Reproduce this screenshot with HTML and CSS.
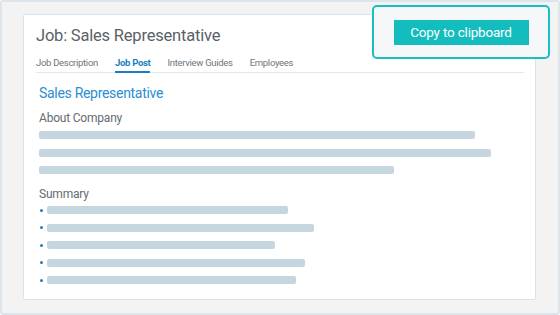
FILE: index.html
```html
<!DOCTYPE html>
<html>
<head>
<title>Job Post</title>
<link rel="stylesheet" href="styles.css">
</head>
<body>

<div class="frame">
  <div class="card">
    <h1 class="job-title">Job: Sales Representative</h1>

    <div class="tabs">
      <span class="tab">Job Description</span>
      <span class="tab active">Job Post</span>
      <span class="tab">Interview Guides</span>
      <span class="tab">Employees</span>
    </div>

    <div class="post">
      <h2 class="post-title">Sales Representative</h2>

      <h3 class="section-title">About Company</h3>
      <div class="lines">
        <div class="line" style="width: 436px;"></div>
        <div class="line" style="width: 452px;"></div>
        <div class="line" style="width: 355px;"></div>
      </div>

      <h3 class="section-title summary">Summary</h3>
      <ul class="bullets">
        <li><span class="line" style="width: 241px;"></span></li>
        <li><span class="line" style="width: 267px;"></span></li>
        <li><span class="line" style="width: 228px;"></span></li>
        <li><span class="line" style="width: 258px;"></span></li>
        <li><span class="line" style="width: 249px;"></span></li>
      </ul>
    </div>
  </div>

  <div class="copy-popup">
    <button class="copy-btn">Copy to clipboard</button>
  </div>
</div>

</body>
</html>
```

FILE: styles.css
```css
body {
  margin: 0;
  font-family: Roboto, "Liberation Sans", sans-serif;
  background-color: #fff;
}

.frame {
  position: relative;
  width: 560px;
  height: 315px;
  box-sizing: border-box;
  padding: 12px 0 0 21px;
  background-color: #f3f3f3;
  border: 2px solid #dde5eb;
  border-radius: 3px;
}

.card {
  width: 513px;
  height: 286px;
  box-sizing: border-box;
  padding: 10px 11px 0 12px;
  background-color: #fff;
  border: 1px solid #d9e4ea;
  border-radius: 2px;
}

.job-title {
  margin: 0;
  font-size: 16.5px;
  line-height: 22px;
  letter-spacing: -0.2px;
  font-weight: 400;
  color: #5b6168;
}

.tabs {
  display: flex;
  gap: 17px;
  margin-top: 9px;
  border-bottom: 1px solid #e1e9ee;
}

.tab {
  font-size: 9.5px;
  line-height: 14px;
  letter-spacing: -0.3px;
  color: #6f757b;
  padding-bottom: 1px;
  border-bottom: 2px solid transparent;
  margin-bottom: -1px;
}

.tab.active {
  color: #1a7fc1;
  font-weight: bold;
  border-bottom-color: #1a7fc1;
}

.post {
  padding-left: 3px;
}

.post-title {
  margin: 11px 0 0;
  font-size: 14px;
  line-height: 18px;
  letter-spacing: -0.3px;
  font-weight: 400;
  color: #2a8ed1;
}

.section-title {
  margin: 9px 0 0;
  font-size: 12px;
  line-height: 15px;
  letter-spacing: -0.2px;
  font-weight: 400;
  color: #666b70;
}

.section-title.summary {
  margin-top: 13px;
}

.lines {
  display: flex;
  flex-direction: column;
  gap: 9.5px;
  margin-top: 5px;
}

.line {
  display: block;
  height: 8px;
  background-color: #c6d6de;
  border-radius: 2px;
}

.bullets {
  list-style: none;
  margin: 4px 0 0;
  padding: 0;
  display: flex;
  flex-direction: column;
  gap: 9.5px;
}

.bullets li {
  display: flex;
  align-items: center;
  gap: 4px;
}

.bullets li::before {
  content: "";
  width: 3px;
  height: 3px;
  margin-left: 0.5px;
  border-radius: 50%;
  background-color: #1a7fc1;
}

.copy-popup {
  position: absolute;
  top: 3px;
  left: 370px;
  width: 178px;
  height: 54px;
  box-sizing: border-box;
  display: flex;
  align-items: center;
  justify-content: center;
  background-color: #f5f7f9;
  border: 2px solid #1cbfc0;
  border-radius: 5px;
}

.copy-btn {
  width: 135px;
  height: 25px;
  padding: 0;
  border: none;
  background-color: #13bdbd;
  color: #fff;
  font-family: Roboto, "Liberation Sans", sans-serif;
  font-size: 13.5px;
  letter-spacing: -0.2px;
  cursor: pointer;
}
```
